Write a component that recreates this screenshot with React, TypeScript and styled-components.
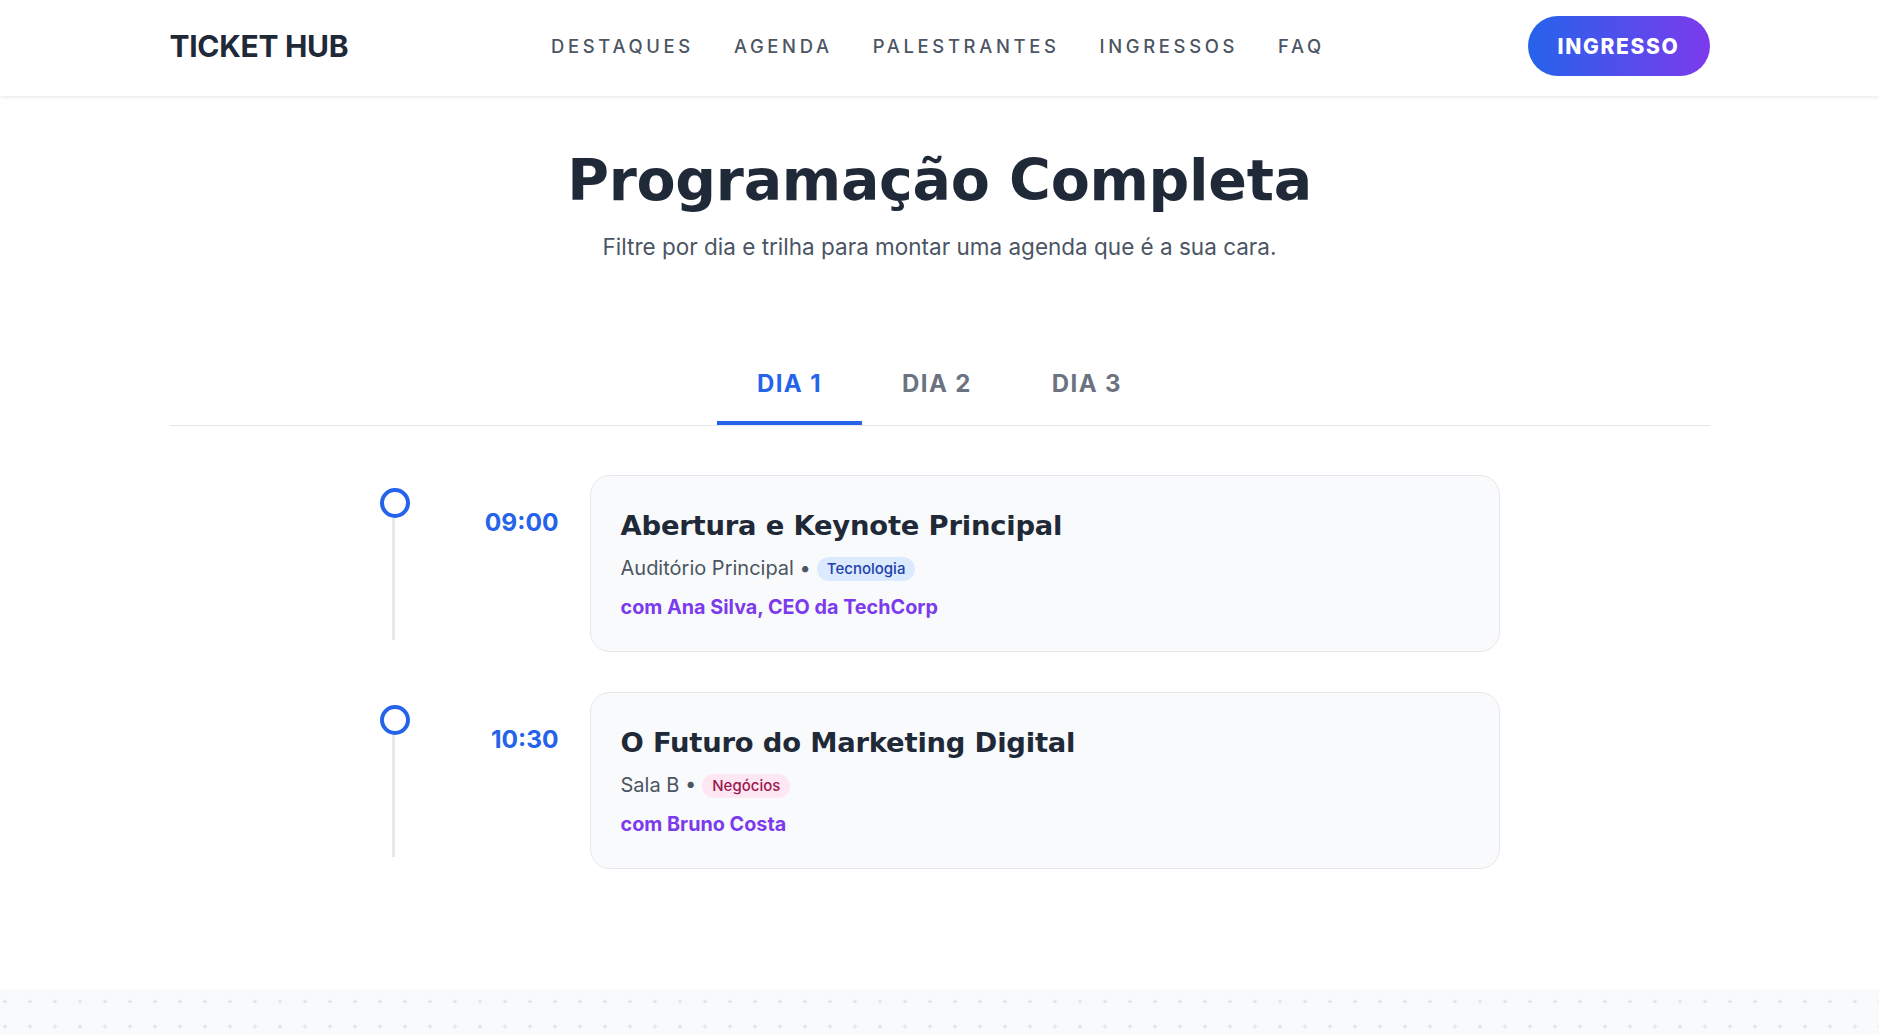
import React, { useState } from "react";
import styled, { createGlobalStyle } from "styled-components";

const GlobalStyle = createGlobalStyle`
  * { box-sizing: border-box; }
  html, body { margin: 0; padding: 0; background: #ffffff; }
  body {
    font-family: Inter, "Noto Sans", Arial, sans-serif;
    color: #1f2937;
    -webkit-font-smoothing: antialiased;
  }
`;

const Header = styled.header`
  height: 96px;
  background: #ffffff;
  box-shadow: 0 1px 4px rgba(0, 0, 0, 0.1);
  position: relative;
  z-index: 2;
`;

const HeaderInner = styled.div`
  max-width: 1540px;
  height: 100%;
  margin: 0 auto;
  padding-bottom: 4px;
  display: flex;
  align-items: center;
  justify-content: space-between;
`;

const Logo = styled.div`
  font-family: Inter, Roboto, sans-serif;
  font-size: 30px;
  font-weight: 700;
  letter-spacing: -0.3px;
  color: #1f2937;
`;

const Nav = styled.nav`
  display: flex;
  gap: 40px;
`;

const NavLink = styled.a`
  font-size: 18.4px;
  font-weight: 500;
  letter-spacing: 0.2em;
  color: #4b5563;
  text-decoration: none;
  cursor: pointer;
`;

const CtaButton = styled.button`
  height: 60px;
  padding: 0 30px;
  border: none;
  border-radius: 999px;
  background: linear-gradient(90deg, #2563eb 0%, #7c3aed 100%);
  color: #ffffff;
  font-family: Inter, sans-serif;
  font-size: 21px;
  font-weight: 800;
  letter-spacing: 0.08em;
  cursor: pointer;
`;

const Section = styled.section`
  max-width: 1540px;
  margin: 0 auto;
  padding: 50px 0 120px;
`;

const Intro = styled.div`
  text-align: center;
`;

const Title = styled.h1`
  margin: 0;
  font-family: "DejaVu Sans", Inter, sans-serif;
  font-size: 57px;
  line-height: 68px;
  font-weight: 700;
  letter-spacing: -0.3px;
  color: #1f2937;
`;

const Subtitle = styled.p`
  margin: 18px 0 0;
  font-size: 22.5px;
  line-height: 30px;
  color: #4b5563;
`;

const TabBar = styled.div`
  margin-top: 90px;
  display: flex;
  justify-content: center;
  border-bottom: 1px solid #e5e7eb;
`;

const Tab = styled.button<{ $active: boolean }>`
  padding: 14px 40px 19px;
  border: none;
  border-bottom: 4px solid ${(p) => (p.$active ? "#2563eb" : "transparent")};
  background: none;
  font-family: Inter, sans-serif;
  font-size: 24px;
  line-height: 36px;
  font-weight: 700;
  letter-spacing: 1.4px;
  color: ${(p) => (p.$active ? "#2563eb" : "#6b7280")};
  cursor: pointer;
`;

const Timeline = styled.div`
  max-width: 1120px;
  margin: 49px auto 0;
  display: flex;
  flex-direction: column;
  gap: 40px;
`;

const Item = styled.div`
  display: flex;
  align-items: stretch;
`;

const Marker = styled.div`
  width: 30px;
  flex-shrink: 0;
  display: flex;
  flex-direction: column;
  align-items: center;
  padding: 13px 0 12px;
`;

const Dot = styled.span`
  width: 30px;
  height: 30px;
  border-radius: 50%;
  border: 4px solid #2563eb;
  background: #ffffff;
  flex-shrink: 0;
`;

const Line = styled.span`
  flex: 1;
  width: 3px;
  margin-left: -3px;
  background: #e5e7eb;
`;

const Time = styled.div`
  width: 149px;
  flex-shrink: 0;
  padding-top: 30px;
  margin-right: 31px;
  text-align: right;
  font-size: 24.5px;
  line-height: 35px;
  font-weight: 700;
  color: #2563eb;
`;

const Card = styled.div`
  flex: 1;
  padding: 30px 30px 29px;
  background: #f9fafb;
  border: 1px solid #e5e7eb;
  border-radius: 20px;
`;

const CardTitle = styled.h3`
  margin: 0;
  font-family: "DejaVu Sans", Inter, sans-serif;
  font-size: 27.4px;
  line-height: 39px;
  font-weight: 700;
  letter-spacing: -0.2px;
  color: #1f2937;
`;

const Meta = styled.div`
  margin-top: 8px;
  display: flex;
  align-items: center;
  gap: 6px;
  font-size: 20px;
  line-height: 30px;
  color: #4b5563;
`;

const Tag = styled.span<{ $bg: string; $fg: string }>`
  display: inline-flex;
  align-items: center;
  height: 24px;
  margin-top: 2px;
  padding: 0 10px;
  border-radius: 999px;
  background: ${(p) => p.$bg};
  color: ${(p) => p.$fg};
  font-size: 15px;
  font-weight: 500;
`;

const Speaker = styled.div`
  margin-top: 9px;
  font-size: 19.8px;
  line-height: 30px;
  font-weight: 700;
  color: #7c3aed;
`;

const PatternBand = styled.div`
  height: 300px;
  background: #f9fafb;
  svg {
    display: block;
    width: 100%;
    height: 100%;
  }
`;

type Session = {
  time: string;
  title: string;
  room: string;
  track: string;
  bg: string;
  fg: string;
  speaker: string;
};

const sessions: Record<number, Session[]> = {
  1: [
    {
      time: "09:00",
      title: "Abertura e Keynote Principal",
      room: "Auditório Principal",
      track: "Tecnologia",
      bg: "#dbeafe",
      fg: "#1e40af",
      speaker: "com Ana Silva, CEO da TechCorp",
    },
    {
      time: "10:30",
      title: "O Futuro do Marketing Digital",
      room: "Sala B",
      track: "Negócios",
      bg: "#fce7f3",
      fg: "#9d174d",
      speaker: "com Bruno Costa",
    },
  ],
  2: [],
  3: [],
};

export default function App() {
  const [day, setDay] = useState(1);
  const list = sessions[day] ?? [];
  return (
    <>
      <GlobalStyle />
      <Header>
        <HeaderInner>
          <Logo>TICKET HUB</Logo>
          <Nav>
            {["DESTAQUES", "AGENDA", "PALESTRANTES", "INGRESSOS", "FAQ"].map((l) => (
              <NavLink key={l}>{l}</NavLink>
            ))}
          </Nav>
          <CtaButton>INGRESSO</CtaButton>
        </HeaderInner>
      </Header>
      <Section>
        <Intro>
          <Title>Programação Completa</Title>
          <Subtitle>Filtre por dia e trilha para montar uma agenda que é a sua cara.</Subtitle>
        </Intro>
        <TabBar>
          {[1, 2, 3].map((d) => (
            <Tab key={d} $active={d === day} onClick={() => setDay(d)}>
              DIA {d}
            </Tab>
          ))}
        </TabBar>
        <Timeline>
          {list.map((s) => (
            <Item key={s.time}>
              <Marker>
                <Dot />
                <Line />
              </Marker>
              <Time>{s.time}</Time>
              <Card>
                <CardTitle>{s.title}</CardTitle>
                <Meta>
                  <span>{s.room} •</span>
                  <Tag $bg={s.bg} $fg={s.fg}>{s.track}</Tag>
                </Meta>
                <Speaker>{s.speaker}</Speaker>
              </Card>
            </Item>
          ))}
        </Timeline>
      </Section>
      <PatternBand>
        <svg aria-hidden="true">
          <defs>
            <pattern id="plus" width="25" height="25" patternUnits="userSpaceOnUse">
              <path d="M3 12.5h4M5 10.5v4" stroke="#dfe2e7" strokeWidth="1.3" />
            </pattern>
          </defs>
          <rect width="100%" height="100%" fill="url(#plus)" />
        </svg>
      </PatternBand>
    </>
  );
}
